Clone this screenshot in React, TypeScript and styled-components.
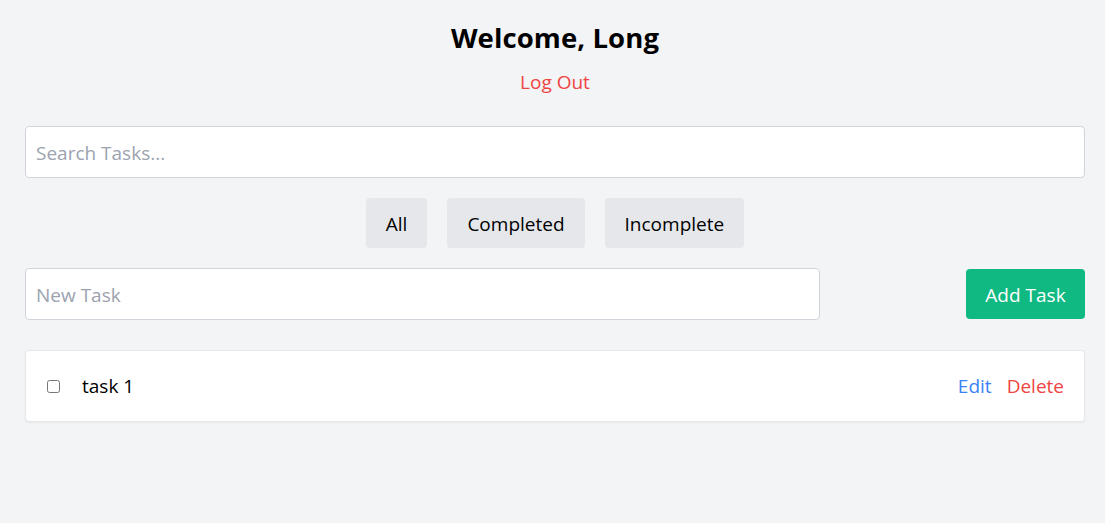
import * as React from 'react';
import styled, { createGlobalStyle } from 'styled-components';

const GlobalStyle = createGlobalStyle`
    body {
        margin: 0;
        background: #f3f4f6;
        font-family: "Open Sans", "Noto Sans", sans-serif;
        color: #111827;
    }
    * { box-sizing: border-box; }
`;

const Page = styled.div`
    min-height: 523px;
    padding: 21px 20px 40px 25px;
    display: flex;
    flex-direction: column;
`;

const Header = styled.div`
    display: flex;
    flex-direction: column;
    align-items: center;
`;

const Title = styled.h1`
    margin: 0;
    font-size: 27.5px;
    line-height: 34px;
    font-weight: 700;
    letter-spacing: 0.1px;
    color: #000;
`;

const LogOut = styled.button`
    margin-top: 13px;
    border: none;
    background: none;
    padding: 0;
    font-family: inherit;
    font-size: 19px;
    line-height: 28px;
    color: #ef4444;
    cursor: pointer;
`;

const Input = styled.input<{ $width?: string }>`
    width: ${p => p.$width || '100%'};
    height: 52px;
    padding: 1px 10px 0;
    border: 1px solid #d1d5db;
    border-radius: 4px;
    background: #fff;
    font-family: inherit;
    font-size: 19px;
    color: #111827;
    outline: none;
    &::placeholder { color: #9ca3af; }
`;

const Search = styled(Input)`
    margin-top: 30px;
`;

const Filters = styled.div`
    margin-top: 20px;
    display: flex;
    justify-content: center;
    gap: 20px;
`;

const FilterButton = styled.button`
    height: 50px;
    padding: 1px 20px 0;
    border: none;
    border-radius: 4px;
    background: #e5e7eb;
    font-family: inherit;
    font-size: 19px;
    color: #000;
    cursor: pointer;
`;

const AddRow = styled.div`
    margin-top: 20px;
    display: flex;
    align-items: center;
    justify-content: space-between;
`;

const AddButton = styled.button`
    height: 50px;
    width: 119px;
    padding: 1px 0 0;
    border: none;
    border-radius: 4px;
    background: #10b981;
    color: #fff;
    font-family: inherit;
    font-size: 19px;
    cursor: pointer;
`;

const TaskList = styled.div`
    margin-top: 30px;
    display: flex;
    flex-direction: column;
    gap: 12px;
`;

const TaskCard = styled.div`
    height: 72px;
    display: flex;
    align-items: center;
    padding: 0 20px 0 21px;
    background: #fff;
    border: 1px solid #e5e7eb;
    border-radius: 4px;
    box-shadow: 0 1px 2px rgba(0, 0, 0, 0.05);
`;

const Check = styled.input`
    margin: 0;
    width: 13px;
    height: 13px;
`;

const TaskText = styled.span`
    margin-left: 22px;
    flex: 1;
    font-size: 19px;
    color: #000;
`;

const Action = styled.button<{ $tone: 'blue' | 'red' }>`
    border: none;
    background: none;
    padding: 0;
    margin-left: 15px;
    font-family: inherit;
    font-size: 19px;
    color: ${p => (p.$tone === 'blue' ? '#3b82f6' : '#ef4444')};
    cursor: pointer;
`;

export default function App() {
    return (
        <Page>
            <GlobalStyle />
            <Header>
                <Title>Welcome, Long</Title>
                <LogOut>Log Out</LogOut>
            </Header>
            <Search placeholder="Search Tasks..." />
            <Filters>
                <FilterButton>All</FilterButton>
                <FilterButton>Completed</FilterButton>
                <FilterButton>Incomplete</FilterButton>
            </Filters>
            <AddRow>
                <Input $width="75%" placeholder="New Task" />
                <AddButton>Add Task</AddButton>
            </AddRow>
            <TaskList>
                <TaskCard>
                    <Check type="checkbox" />
                    <TaskText>task 1</TaskText>
                    <Action $tone="blue">Edit</Action>
                    <Action $tone="red">Delete</Action>
                </TaskCard>
            </TaskList>
        </Page>
    );
}
